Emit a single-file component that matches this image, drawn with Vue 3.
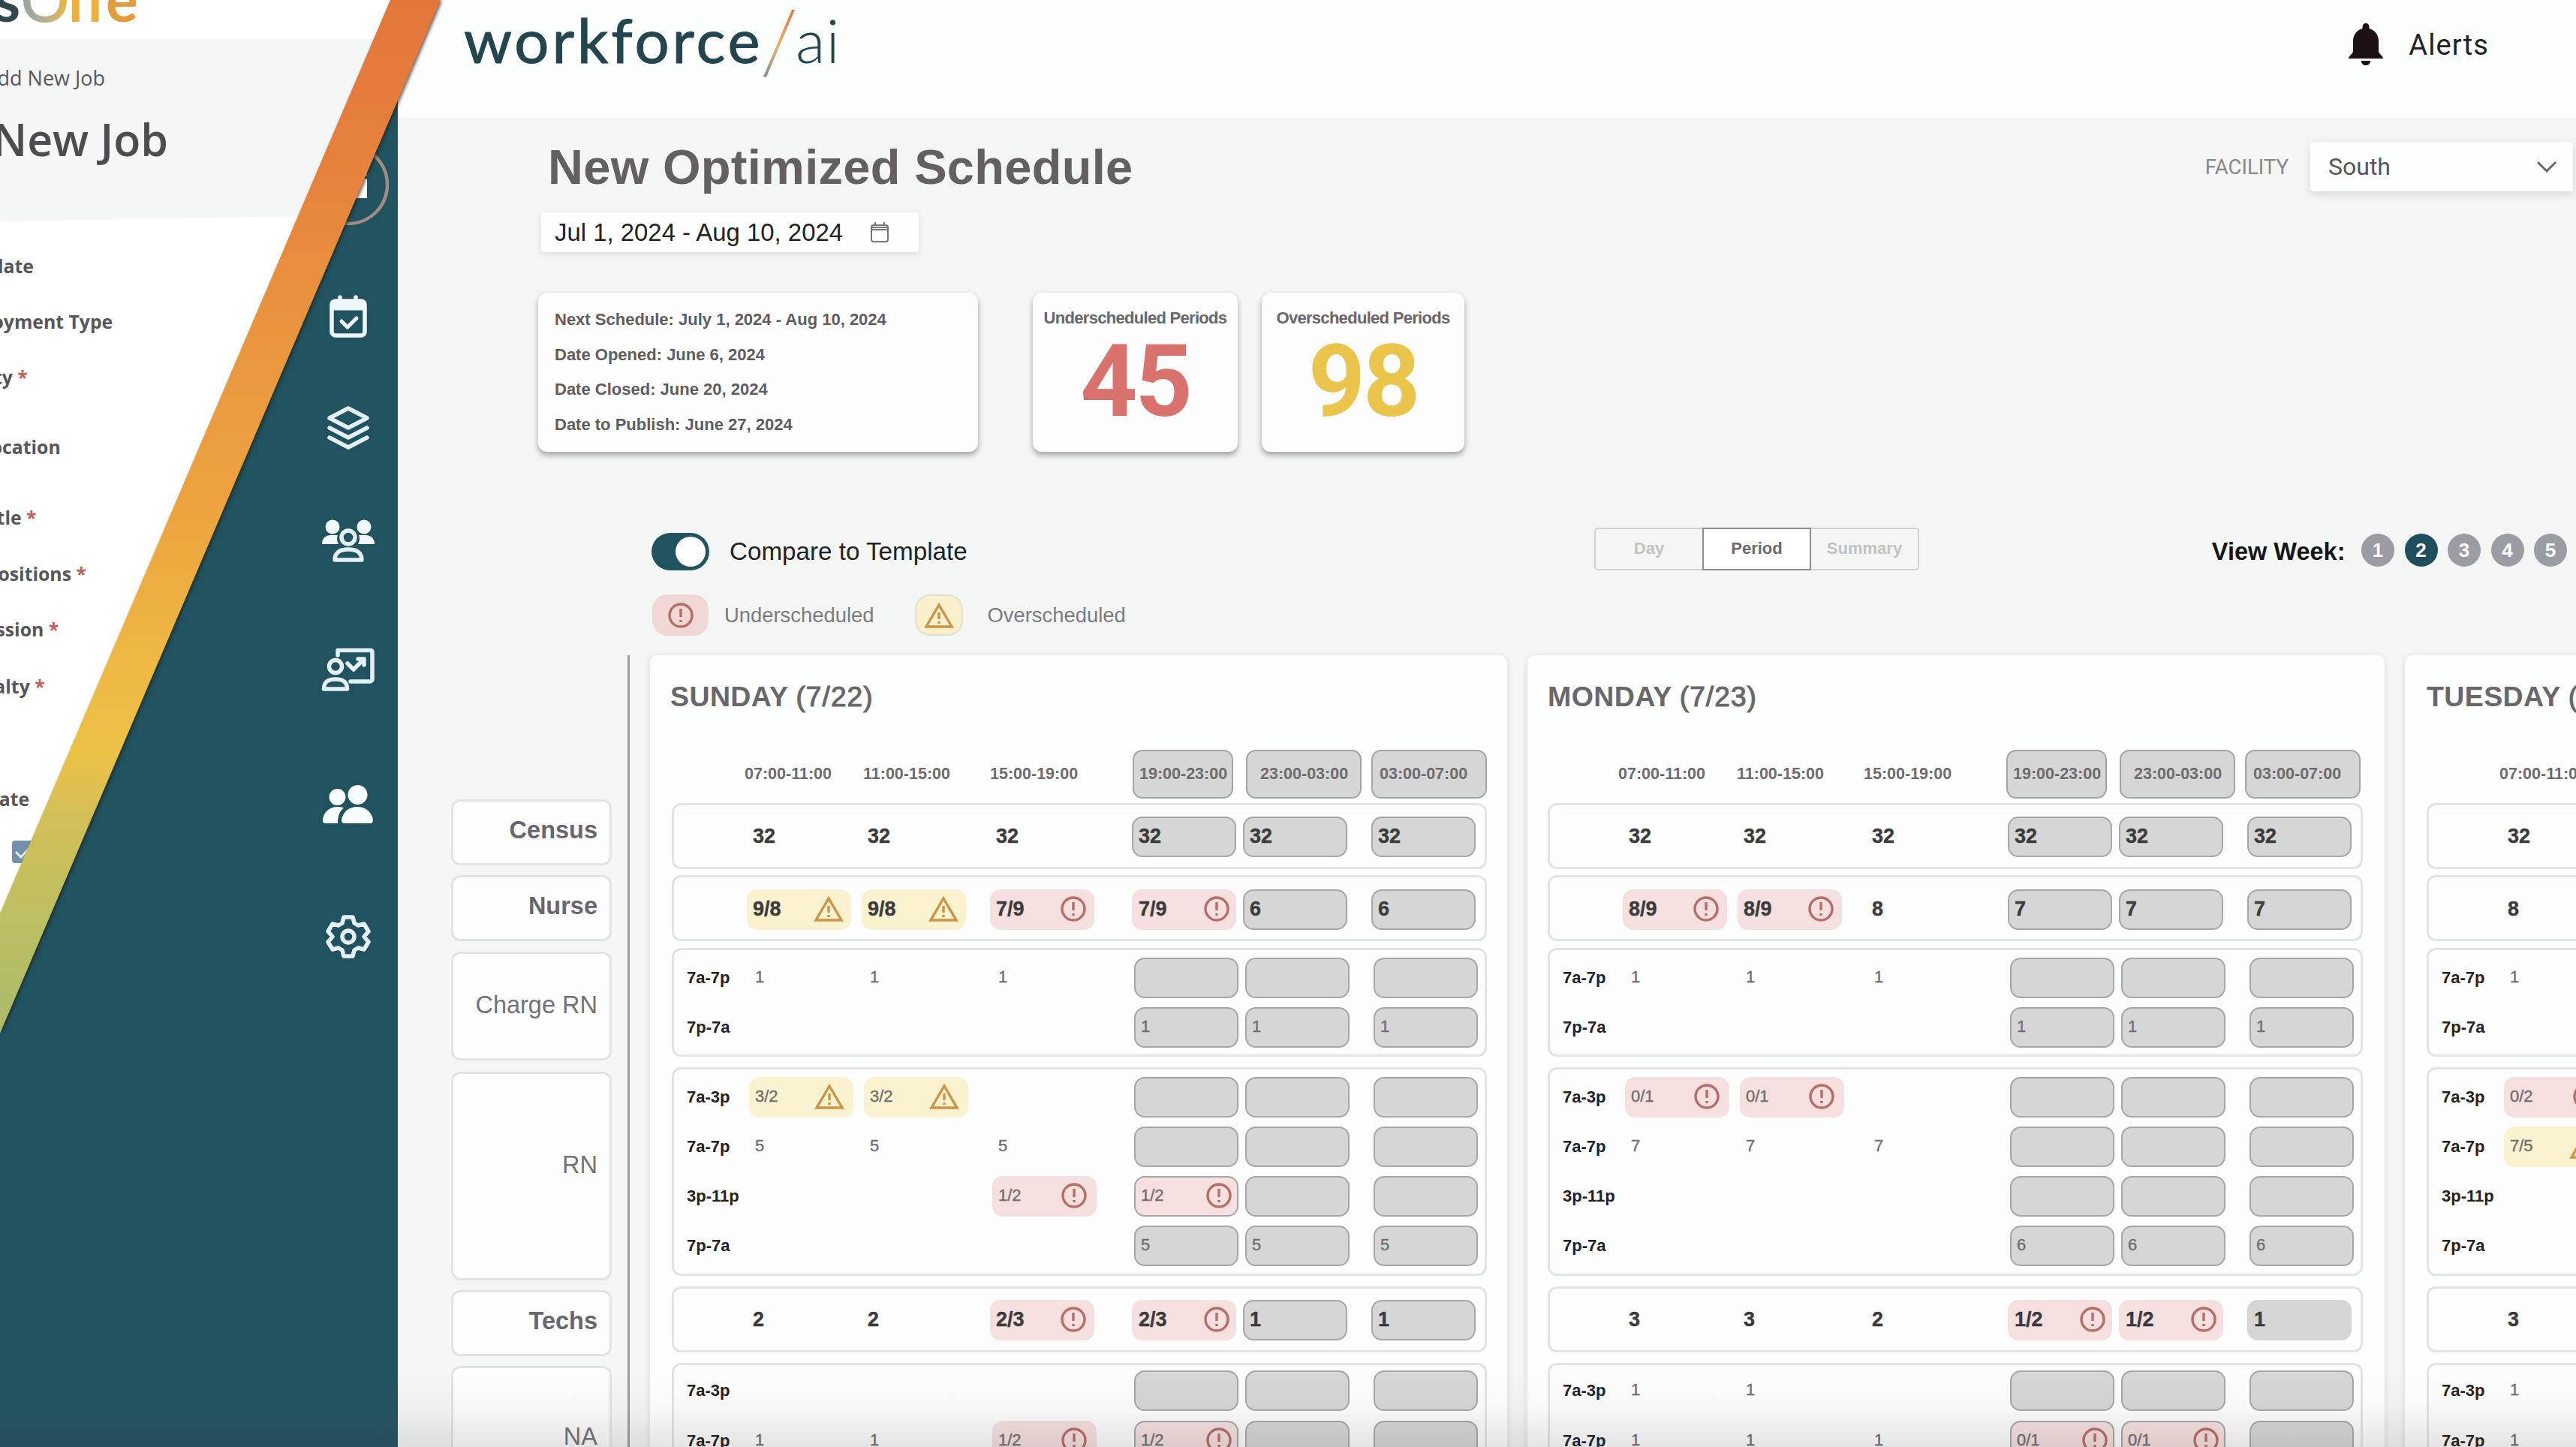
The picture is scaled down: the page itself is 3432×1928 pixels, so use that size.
<template>
	<div class="screen">
		<div class="app">
			<nav class="sidebar">
				<span class="nav-item active">
					<svg width="108" height="108" viewBox="0 0 108 108" fill="none">
						<circle cx="54" cy="54" r="52" stroke="#a08c82" stroke-width="4.500" />
						<path d="M34 38h45v4H34zM32 46h47v26H32z" fill="#fff" />
					</svg>
				</span>
				<span class="nav-item">
					<svg width="54" height="60" viewBox="0 0 54 60" fill="none" stroke="#edf6fb" stroke-width="5.5" stroke-linecap="round" stroke-linejoin="round">
						<path d="M16 5v8M37 5v8" />
						<rect x="5" y="10" width="44" height="46" rx="5" />
						<path d="M5 11h44v10H5z" fill="#edf6fb" stroke-width="3" />
						<path d="M18 37l8 8 12-12" stroke-width="5" />
					</svg>
				</span>
				<span class="nav-item">
					<svg width="60" height="60" viewBox="0 0 60 60" fill="none" stroke="#e4f0f8" stroke-width="5.5" stroke-linecap="round" stroke-linejoin="round">
						<path d="M30 4l25 13-25 13L5 17z" />
						<path d="M5 30l25 13 25-13M5 43l25 13 25-13" />
					</svg>
				</span>
				<span class="nav-item">
					<svg width="72" height="60" viewBox="0 0 72 60">
						<g fill="#f3fafd">
							<circle cx="15" cy="11" r="9.5" />
							<circle cx="57" cy="11" r="9.5" />
							<path d="M1 34c0-8 5-12 12-12h9a14 14 0 0 0 1 12zM71 34c0-8-5-12-12-12h-9a14 14 0 0 1-1 12z" />
						</g>
						<g fill="none" stroke="#e4f0f8" stroke-width="5.5">
							<circle cx="36" cy="25" r="9" />
							<path d="M18 55c0-9 6-14 18-14s18 5 18 14z" stroke-linejoin="round" />
						</g>
					</svg>
				</span>
				<span class="nav-item">
					<svg width="72" height="60" viewBox="0 0 72 60" fill="none" stroke="#e4f0f8" stroke-width="5.5" stroke-linecap="round" stroke-linejoin="round">
						<path d="M22 11V4.500h44a2 2 0 0 1 2 2V43a3 3 0 0 1-3 3H39" />
						<path d="M35 22l8 8 13-13M49 16h8v8" />
						<circle cx="19" cy="26" r="8.500" />
						<path d="M3.500 56c0-9 5-13 15.500-13s15.500 4 15.500 13z" />
					</svg>
				</span>
				<span class="nav-item">
					<svg width="70" height="56" viewBox="0 0 70 56" fill="#f6fbfd">
						<circle cx="20.500" cy="18" r="11" />
						<circle cx="47.500" cy="15" r="13" />
						<path d="M1 50c0-11 8-19 20-19 3 0 6 .5 8 1.500-6 4.500-8 11-8 20.500H5c-3 0-4-1-4-3z" />
						<path d="M26 49c1-10 9-18 21-18s20 8 21 18c0 2-1 4-4 4H30c-3 0-4-2-4-4z" />
					</svg>
				</span>
				<span class="nav-item">
					<svg width="60" height="60" viewBox="0 0 60 60" fill="none" stroke="#e4f0f8" stroke-width="5.5" stroke-linejoin="round">
						<path d="M24 4h12l2 8 5 3 8-2 6 10-6 7 6 7-6 10-8-2-5 3-2 8H24l-2-8-5-3-8 2-6-10 6-7-6-7 6-10 8 2 5-3z" />
						<circle cx="30" cy="30" r="8" />
					</svg>
				</span>
			</nav>

			<div class="main">
				<header class="topbar">
					<div class="brand">
						<span class="brand-name">workforce</span>
						<svg width="44" height="94" viewBox="0 0 44 94">
							<defs>
								<linearGradient id="slash" x1="0" y1="1" x2="0" y2="0">
									<stop offset="0" stop-color="#7f9097" />
									<stop offset=".45" stop-color="#e9b56a" />
									<stop offset="1" stop-color="#e07a45" />
								</linearGradient>
							</defs>
							<path d="M0 91L38 2l4 0L4 92z" fill="url(#slash)" />
						</svg>
						<span class="brand-ai">ai</span>
					</div>
					<div class="alerts">
						<svg width="46" height="57" viewBox="0 0 46 57" fill="#1c1216">
							<path d="M23 0c3 0 4.500 2 4.500 5v2C35 9 40 15 40 24v13c0 4 5 5 6 10H0c1-5 6-6 6-10V24C6 15 11 9 18.500 7V5c0-3 1.500-5 4.500-5zM17 50h12c0 4-3 6-6 6s-6-2-6-6z" />
						</svg>
						<span>Alerts</span>
					</div>
				</header>

				<div class="title-row">
					<h1>New Optimized Schedule</h1>
					<div class="facility">
						<label>FACILITY</label>
						<div class="select">
							<span>South</span>
							<svg width="28" height="18" viewBox="0 0 28 18" fill="none" stroke="#68686c" stroke-width="3">
								<path d="M2 3l12 12L26 3" />
							</svg>
						</div>
					</div>
				</div>

				<div class="date-field">
					<span>Jul 1, 2024 - Aug 10, 2024</span>
					<svg width="26" height="28" viewBox="0 0 26 28" fill="none" stroke="#77777a" stroke-width="2">
						<rect x="2" y="4" width="22" height="22" rx="3" />
						<path d="M2 10h22M7 0v5M19 0v5M2 7h22" />
					</svg>
				</div>

				<div class="cards">
					<ul class="card info">
						<li v-for="line in info" :key="line">{{ line }}</li>
					</ul>
					<div class="card stat under">
						<h4>Underscheduled Periods</h4>
						<strong>45</strong>
					</div>
					<div class="card stat over">
						<h4>Overscheduled Periods</h4>
						<strong>98</strong>
					</div>
				</div>

				<div class="controls">
					<button class="toggle" :class="{ on: compare }" @click="compare = !compare"><i></i></button>
					<span class="toggle-label">Compare to Template</span>
					<div class="segments">
						<button v-for="v in views" :key="v" :class="{ selected: v === view }" @click="view = v">{{ v }}</button>
					</div>
					<div class="weeks">
						<b>View Week:</b>
						<button v-for="n in 5" :key="n" :class="{ selected: n === week }" @click="week = n">{{ n }}</button>
					</div>
				</div>

				<div class="legend">
					<span class="swatch under">
						<svg class="mark" viewBox="0 0 36 36"><circle cx="18" cy="18" r="15" /><path d="M18 9v11M18 24v3" /></svg>
					</span>
					<span class="legend-text">Underscheduled</span>
					<span class="swatch over">
						<svg class="mark wide" viewBox="0 0 40 36"><path d="M20 4L37 33H3z" /><path d="M20 14v9M20 26v3" /></svg>
					</span>
					<span class="legend-text">Overscheduled</span>
				</div>

				<div class="board">
					<div class="labels">
						<div v-for="g in groups" :key="g.id" class="group" :class="[g.id, { total: g.total }]">{{ g.name }}</div>
					</div>
					<div class="days">
						<section v-for="day in days" :key="day.name" class="day" :class="{ tight: day.tight }">
							<h2>{{ day.name }} <span>({{ day.date }})</span></h2>
							<div class="slots">
								<span v-for="s in slots" :key="s">{{ s }}</span>
							</div>
							<div v-for="g in groups" :key="g.id" class="group" :class="[g.id, { total: g.total }]">
								<div v-for="(row, r) in day.rows[g.id]" :key="r" class="row">
									<span class="shift">{{ g.shifts[r] }}</span>
									<span v-for="(cell, c) in row" :key="c" class="cell" :class="cellClass(cell, c)">
										{{ cell.replace(/[+!~]/, '') }}
										<svg v-if="cell.endsWith('!')" class="mark" viewBox="0 0 36 36"><circle cx="18" cy="18" r="15" /><path d="M18 9v11M18 24v3" /></svg>
										<svg v-if="cell.endsWith('+')" class="mark wide" viewBox="0 0 40 36"><path d="M20 4L37 33H3z" /><path d="M20 14v9M20 26v3" /></svg>
									</span>
								</div>
							</div>
						</section>
					</div>
				</div>
			</div>
		</div>

		<div class="wipe">
			<div class="job-page">
				<div class="job-logo"><span class="s">s</span><span class="o">O</span><span class="n">n</span><span class="e">e</span></div>
				<div class="job-head">
					<p>Add New Job</p>
					<h3>Add New Job</h3>
				</div>
				<div class="job-form">
					<label v-for="f in fields" :key="f.text" :style="{ marginTop: f.gap + 'px' }">{{ f.text }} <em v-if="f.required">*</em></label>
					<span class="check">
						<svg width="30" height="28" viewBox="0 0 30 28" fill="none" stroke="#dfe8ee" stroke-width="3"><path d="M5 15l7 7L27 6" /></svg>
					</span>
				</div>
			</div>
			<div class="stripe-shadow"><div class="stripe"></div></div>
		</div>
		<div class="fade"></div>
	</div>
</template>

<script setup>
import { ref } from 'vue'

const compare = ref(true)
const views = ['Day', 'Period', 'Summary']
const view = ref('Period')
const week = ref(2)

const info = [
	'Next Schedule: July 1, 2024 - Aug 10, 2024',
	'Date Opened: June 6, 2024',
	'Date Closed: June 20, 2024',
	'Date to Publish: June 27, 2024',
]

const slots = ['07:00-11:00', '11:00-15:00', '15:00-19:00', '19:00-23:00', '23:00-03:00', '03:00-07:00']

const groups = [
	{ id: 'census', name: 'Census', total: true, shifts: [''] },
	{ id: 'nurse', name: 'Nurse', total: true, shifts: [''] },
	{ id: 'charge', name: 'Charge RN', shifts: ['7a-7p', '7p-7a'] },
	{ id: 'rn', name: 'RN', shifts: ['7a-3p', '7a-7p', '3p-11p', '7p-7a'] },
	{ id: 'techs', name: 'Techs', total: true, shifts: [''] },
	{ id: 'na', name: 'NA', shifts: ['7a-3p', '7a-7p'] },
]

// + over, ! under, ~ no outline
const days = [
	{
		name: 'SUNDAY', date: '7/22',
		rows: {
			census: [['32', '32', '32', '32', '32', '32']],
			nurse: [['9/8+', '9/8+', '7/9!', '7/9!', '6', '6']],
			charge: [['1', '1', '1', '', '', ''], ['', '', '', '1', '1', '1']],
			rn: [
				['3/2+', '3/2+', '', '', '', ''],
				['5', '5', '5', '', '', ''],
				['', '', '1/2!', '1/2!', '', ''],
				['', '', '', '5', '5', '5'],
			],
			techs: [['2', '2', '2/3!', '2/3!', '1', '1']],
			na: [['', '', '', '', '', ''], ['1', '1', '1/2!', '1/2!', '', '']],
		},
	},
	{
		name: 'MONDAY', date: '7/23', tight: true,
		rows: {
			census: [['32', '32', '32', '32', '32', '32']],
			nurse: [['8/9!', '8/9!', '8', '7', '7', '7']],
			charge: [['1', '1', '1', '', '', ''], ['', '', '', '1', '1', '1']],
			rn: [
				['0/1!', '0/1!', '', '', '', ''],
				['7', '7', '7', '', '', ''],
				['', '', '', '', '', ''],
				['', '', '', '6', '6', '6'],
			],
			techs: [['3', '3', '2', '1/2!', '1/2!', '1~']],
			na: [['1', '1', '', '', '', ''], ['1', '1', '1', '0/1!', '0/1!', '']],
		},
	},
	{
		name: 'TUESDAY', date: '7/24',
		rows: {
			census: [['32']],
			nurse: [['8']],
			charge: [['1'], ['']],
			rn: [['0/2!'], ['7/5+'], [''], ['']],
			techs: [['3']],
			na: [['1'], ['1']],
		},
	},
]

const fields = [
	{ text: 'Template', gap: 0 },
	{ text: 'Employment Type', gap: 38 },
	{ text: 'Facility', gap: 38, required: true },
	{ text: 'Job Location', gap: 57 },
	{ text: 'Job Title', gap: 58, required: true },
	{ text: '# of Positions', gap: 39, required: true },
	{ text: 'Profession', gap: 38, required: true },
	{ text: 'Specialty', gap: 40, required: true },
	{ text: 'End Date', gap: 114 },
]

const cellClass = (cell, col) => ({
	night: col > 2,
	under: cell.endsWith('!'),
	over: cell.endsWith('+'),
	plain: cell.endsWith('~'),
})
</script>

<style>
body {
	margin: 0;
	overflow: hidden;
}
</style>

<style scoped>
* {
	box-sizing: border-box;
}
.screen {
	position: relative;
	width: 3432px;
	height: 1928px;
	overflow: hidden;
	background: #f4f6f6;
	font-family: 'Liberation Sans', Arial, sans-serif;
	white-space: nowrap;
}
.app {
	display: flex;
	height: 100%;
}
h1, h2, h3, h4, p, ul {
	margin: 0;
	padding: 0;
}
button {
	padding: 0;
	border: none;
	font-family: inherit;
}

/* sidebar */
.sidebar {
	flex: none;
	width: 530px;
	padding: 166px 12px 0 410px;
	background: #21525f;
	display: grid;
	grid-template-rows: 160px 190px 108px 194px 148px 212px 140px;
	align-content: start;
}
.nav-item {
	display: flex;
	justify-content: center;
	align-items: center;
}

/* header */
.main {
	flex: none;
	width: 2902px;
}
.topbar {
	height: 157px;
	padding: 11px 116px 0 88px;
	background: #fcfdfd;
	display: flex;
	justify-content: space-between;
	align-items: flex-start;
}
.brand {
	display: flex;
	font-family: Lato, 'Open Sans', sans-serif;
	font-size: 81.5px;
	line-height: 84px;
	color: #22454e;
}
.brand-name {
	width: 399px;
	letter-spacing: 3.9px;
	-webkit-text-stroke: 1px #22454e;
}
.brand-ai {
	margin-left: -1px;
	font-weight: 300;
	letter-spacing: 1px;
}
.alerts {
	display: flex;
	align-items: center;
	gap: 34px;
	margin-top: 20px;
	font-family: Roboto, sans-serif;
	font-size: 38px;
	letter-spacing: 1.1px;
	color: #222;
}
.title-row {
	display: flex;
	justify-content: space-between;
	align-items: flex-start;
	height: 126px;
	padding: 32px 4px 0 200px;
}
h1 {
	font-size: 65px;
	line-height: 67px;
	letter-spacing: 0.3px;
	color: #646061;
}
.facility {
	display: flex;
	align-items: center;
	font-family: Roboto, sans-serif;
}
.facility label {
	margin-right: 29px;
	font-size: 27.5px;
	color: #88888b;
}
.select {
	display: flex;
	align-items: center;
	justify-content: space-between;
	width: 350px;
	height: 66px;
	padding: 0 21px 0 24px;
	border-radius: 4px;
	background: #fdfefe;
	box-shadow: 0 4px 12px rgba(0, 0, 0, 0.13);
	font-size: 32px;
	color: #555458;
}
.date-field {
	display: flex;
	align-items: center;
	gap: 36px;
	width: 503px;
	height: 53px;
	margin-left: 191px;
	padding-left: 18px;
	border-radius: 4px;
	background: #fefefe;
	box-shadow: 0 3px 9px rgba(0, 0, 0, 0.1);
	font-size: 32.9px;
	color: #222;
}

/* summary cards */
.cards {
	display: flex;
	margin: 54px 0 0 187px;
}
.card {
	height: 212px;
	border-radius: 12px;
	background: #fdfdfd;
	box-shadow: 0 5px 7px rgba(60, 65, 70, 0.4), 0 0 7px rgba(0, 0, 0, 0.06);
}
.info {
	width: 586px;
	padding: 13px 22px;
	list-style: none;
	font-size: 22px;
	font-weight: bold;
	line-height: 46.7px;
	color: #5f5d61;
}
.stat {
	text-align: center;
}
.stat h4 {
	margin-top: 19px;
	font-size: 22px;
	line-height: 30px;
	letter-spacing: -0.7px;
	color: #68666a;
}
.stat strong {
	display: block;
	margin-top: 5px;
	font-family: Roboto, sans-serif;
	font-size: 133px;
	line-height: 130px;
	letter-spacing: -3px;
}
.stat.under {
	width: 273px;
	margin-left: 73px;
}
.stat.under strong {
	color: #d9716c;
}
.stat.over {
	width: 270px;
	margin-left: 32px;
}
.stat.over strong {
	color: #ebc54b;
}

/* controls */
.controls {
	display: flex;
	align-items: center;
	height: 60px;
	margin-top: 101px;
	padding: 0 12px 0 338px;
}
.toggle {
	width: 77px;
	height: 50px;
	padding: 5px;
	border-radius: 25px;
	background: #9a9ea5;
	display: flex;
	margin-top: 4px;
}
.toggle.on {
	background: #21525f;
	justify-content: flex-end;
}
.toggle i {
	width: 40px;
	height: 40px;
	border-radius: 50%;
	background: #fff;
}
.toggle-label {
	width: 1152px;
	margin: 4px 0 0 27px;
	font-size: 33.2px;
	color: #222;
}
.segments {
	display: flex;
	height: 57px;
	margin-top: -4px;
	border: 2px solid #cfd1d2;
	border-radius: 5px;
}
.segments button {
	width: 142px;
	background: none;
	font-size: 22px;
	font-weight: bold;
	color: #c2c2c2;
}
.segments button.selected {
	margin: -2px 0;
	width: 145px;
	border: 2px solid #8a8d90;
	background: #fff;
	color: #6c6a6d;
}
.weeks {
	display: flex;
	align-items: center;
	gap: 13.5px;
	margin-left: auto;
}
.weeks b {
	margin: 4px 8px 0 0;
	font-size: 32.5px;
	color: #161616;
}
.weeks button {
	width: 44px;
	height: 44px;
	border-radius: 50%;
	background: #9a9da3;
	color: #fff;
	font-size: 26px;
	font-weight: bold;
}
.weeks button.selected {
	background: #1f4f5e;
}

.legend {
	display: flex;
	align-items: center;
	height: 55px;
	margin: 29px 0 0 339px;
	font-size: 27.4px;
	color: #7c7b7e;
}
.swatch {
	display: flex;
	align-items: center;
	justify-content: center;
	height: 55px;
	border-radius: 20px;
}
.swatch.under {
	width: 75px;
	background: #f2d8d4;
}
.swatch.over {
	width: 64px;
	margin: 0 32px 0 55px;
	border: 2px solid #e4e0d4;
	background: #faf0cb;
}
.swatch.under + .legend-text {
	margin-left: 21px;
}
.mark {
	flex: none;
	width: 36px;
	height: 36px;
	fill: none;
	stroke: #b96c66;
	stroke-width: 3.4;
}
.mark.wide {
	width: 40px;
	stroke: #cb9447;
}

/* schedule board */
.board {
	display: flex;
	height: 1055px;
	margin-top: 26px;
}
.labels {
	flex: none;
	width: 309px;
	padding: 192px 21px 0 71px;
	border-right: 3px solid #9c9da0;
}
.group {
	border: 3px solid #e2e3e3;
	border-radius: 12px;
	background: #fdfdfd;
}
.labels .group {
	display: flex;
	align-items: center;
	justify-content: flex-end;
	padding-right: 16px;
	padding-bottom: 5px;
	font-size: 32.5px;
	color: #747276;
}
.labels .group.total {
	font-weight: bold;
	color: #69676b;
}
.group.census {
	height: 88px;
	margin-top: 6px;
}
.labels .group.census {
	margin-top: 0;
}
.group.nurse {
	height: 88px;
	margin-top: 8px;
}
.group.charge {
	height: 145px;
	margin-top: 9px;
}
.group.rn {
	height: 278px;
	margin-top: 14px;
}
.group.techs {
	height: 88px;
	margin-top: 14px;
}
.group.na {
	height: 220px;
	margin-top: 14px;
}
.labels .nurse {
	margin-top: 13px;
}
.labels .charge {
	margin-top: 14px;
	padding-bottom: 2px;
}
.labels .rn {
	margin-top: 15px;
	padding-bottom: 29px;
}
.labels .techs {
	margin-top: 13px;
}
.labels .na {
	margin-top: 13px;
	padding-bottom: 32px;
}

.days {
	display: flex;
	gap: 27px;
	margin-left: 27px;
}
.day {
	flex: none;
	width: 1142px;
	height: 1200px;
	padding: 32px 27px 0 29px;
	border-radius: 10px 10px 0 0;
	background: #fdfefe;
	box-shadow: 0 2px 10px rgba(0, 0, 0, 0.12);
}
.day.tight {
	padding-left: 27px;
	padding-right: 29px;
}
h2 {
	margin-left: -2px;
	font-size: 37.5px;
	line-height: 46px;
	letter-spacing: 0.4px;
	color: #69676a;
}
.day + .day h2 {
	margin-left: 0;
}
h2 span {
	font-size: 37px;
	font-weight: normal;
	letter-spacing: 1.1px;
	-webkit-text-stroke: 1.1px #69676a;
}
.slots {
	display: grid;
	grid-template-columns: 158px 169px 190px 151px 167px 154px;
	align-items: center;
	height: 65px;
	margin: 47px 0 0 97px;
	font-size: 21.5px;
	font-weight: bold;
	color: #6e6c6e;
}
.tight .slots {
	margin-left: 94px;
}
.slots span:nth-child(n + 4) {
	height: 65px;
	padding-left: 9px;
	border: 2px solid #a2a5a7;
	border-radius: 13px;
	background: #d5d6d5;
	line-height: 61px;
}
.slots span:nth-child(4) {
	width: 134px;
	padding-left: 7px;
}
.slots span:nth-child(5) {
	width: 154px;
	padding-left: 17px;
}
.row {
	display: grid;
	grid-template-columns: 100px 153px 171px 189px 148px 171px 140px;
	align-items: center;
	height: 54px;
	font-size: 22px;
	color: #706e70;
}
.total .row {
	grid-template-columns: 97px 153px 171px 189px 148px 171px 140px;
	font-size: 27px;
	font-weight: bold;
	color: #3c3b3c;
}
.day .census {
	padding-top: 15px;
}
.day .nurse {
	padding-top: 16px;
}
.day .charge {
	padding-top: 10px;
}
.charge .row + .row {
	margin-top: 12px;
}
.day .rn {
	padding-top: 10px;
}
.rn .row + .row {
	margin-top: 12px;
}
.day .techs {
	padding-top: 15px;
}
.day .na {
	padding-top: 7px;
}
.na .row + .row {
	margin-top: 13px;
}
.shift {
	padding-left: 17px;
	font-weight: bold;
	color: #222;
}
.cell {
	display: flex;
	align-items: center;
	justify-content: space-between;
	width: 139px;
	height: 54px;
	padding: 0 12px 2px 8px;
	border-radius: 14px;
	-webkit-text-stroke: 0.4px currentColor;
}
.total .cell {
	padding-right: 10px;
}
.cell.night {
	padding: 0 6px 2px 7px;
	border: 2px solid #a5a8aa;
	background: #d5d6d5;
}
.cell.over {
	background: #faf1cf;
}
.cell.under {
	background: #f5e0df;
}
.total .cell.under, .cell.plain {
	border-color: transparent;
	background-clip: border-box;
}

/* slanted overlay */
.wipe {
	position: absolute;
	inset: 0 auto auto 0;
	width: 640px;
	height: 1400px;
}
.job-page {
	width: 640px;
	height: 1400px;
	background: #fff;
	clip-path: polygon(0 0, 522px 0, 0 1220px);
	font-family: 'Open Sans', sans-serif;
	color: #57565a;
	display: flex;
	flex-direction: column;
}
.job-logo {
	display: flex;
	height: 94px;
	margin: -42px 0 0 -8px;
	font-family: Lato, sans-serif;
	font-size: 80px;
	line-height: 80px;
}
.job-logo span {
	font-weight: bold;
}
.job-logo .s {
	width: 36px;
	color: #32474d;
}
.job-logo .o {
	width: 63px;
	background: linear-gradient(90deg, #93a3a5, #b3b091 50%, #edb73c);
	-webkit-background-clip: text;
	background-clip: text;
	color: transparent;
	font-weight: normal;
	-webkit-text-stroke: 1.5px transparent;
}
.job-logo .n {
	width: 50px;
	color: #ecb13c;
}
.job-logo .e {
	color: #e59a3c;
}
.job-head {
	height: 243px;
	padding-top: 32px;
	background: #f5f6f6;
	clip-path: polygon(0 0, 100% 0, 100% 232px, 0 100%);
}
.job-head p, .job-head h3 {
	display: flex;
	justify-content: flex-end;
}
.job-head p {
	width: 140px;
	font-size: 27px;
	line-height: 40px;
}
.job-head h3 {
	width: 224px;
	margin-top: 22px;
	font-size: 59px;
	font-weight: 600;
	line-height: 78px;
	color: #4d4c50;
}
.job-form {
	display: flex;
	flex-direction: column;
	margin: 41px 0 0 -72px;
	font-size: 24.8px;
	font-weight: bold;
	line-height: 36px;
}
.job-form em {
	font-style: normal;
	color: #bd5f5a;
}
.check {
	width: 30px;
	height: 30px;
	margin: 38px 0 0 88px;
	border-radius: 4px;
	background: #7391a8;
}
.stripe-shadow {
	position: absolute;
	inset: 0;
	filter: drop-shadow(2px 1px 2px rgba(30, 30, 20, 0.7));
}
.stripe {
	width: 640px;
	height: 1400px;
	background: linear-gradient(180deg, #e3773b 0, #e67f3c 200px, #ea983e 480px, #eda33f 680px, #eeb843 880px, #ecc146 1000px, #d3bf58 1090px, #b9bf63 1240px, #adb968 1380px);
	clip-path: polygon(520px 0, 587px 0, 0 1377px, 0 1217px);
}
.fade {
	position: absolute;
	inset: auto 0 0 0;
	height: 100px;
	background: linear-gradient(180deg, rgba(60, 60, 60, 0), rgba(60, 60, 60, 0.03) 50%, rgba(60, 60, 60, 0.13));
	pointer-events: none;
}
</style>
